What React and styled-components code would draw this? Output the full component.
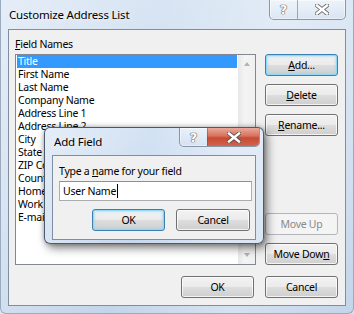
import React from 'react';
import styled, { createGlobalStyle, css } from 'styled-components';

const GlobalStyle = createGlobalStyle`
  html, body {
    margin: 0;
    padding: 0;
  }
  body {
    width: 354px;
    height: 314px;
    overflow: hidden;
    background: #dbe6f2;
    font-family: "Noto Sans", "Open Sans", sans-serif;
    font-size: 10.5px;
    letter-spacing: -0.25px;
    color: #000;
  }
`;

const Window = styled.div`
  position: relative;
  box-sizing: border-box;
  width: 354px;
  height: 314px;
  display: flex;
  flex-direction: column;
  padding: 0 7px 8px 7px;
  border-radius: 0 0 6px 6px;
  border: 1px solid #9aabbf;
  border-top: none;
  background:
    linear-gradient(100deg, rgba(255,255,255,0.35) 0%, rgba(255,255,255,0) 40%, rgba(255,255,255,0.3) 70%, rgba(255,255,255,0) 100%),
    linear-gradient(180deg, #d7e4f3 0%, #cddcee 60%, #c3d5ea 100%);
`;

const TitleBar = styled.div`
  height: ${p => p.$h}px;
  display: flex;
  align-items: center;
  flex-shrink: 0;
`;

const Title = styled.span`
  padding-left: ${p => p.$indent || 0}px;
  font-size: 11.5px;
  letter-spacing: -0.2px;
  color: #000;
  text-shadow: 0 0 6px rgba(255,255,255,0.9);
  flex: 1;
`;

const CaptionButtons = styled.div`
  align-self: flex-start;
  display: flex;
  height: ${p => p.$h}px;
  margin-right: ${p => p.$mr || 0}px;
  border: 1px solid rgba(70, 85, 105, 0.55);
  border-top: none;
  border-radius: 0 0 5px 5px;
  overflow: hidden;
  box-shadow: inset 0 0 0 1px rgba(255,255,255,0.5);
`;

const CaptionButton = styled.div`
  width: ${p => p.$w}px;
  display: flex;
  align-items: center;
  justify-content: center;
  font-family: "DejaVu Sans", sans-serif;
  font-weight: bold;
  font-size: 13px;
  letter-spacing: 0;
  color: #fff;
  text-shadow: 0 0 1px #555, 0 0 1px #555, 0 0 1px #555;
  background: linear-gradient(180deg, rgba(255,255,255,0.45) 0%, rgba(255,255,255,0.15) 50%, rgba(200,215,235,0.2) 100%);
  & + & {
    border-left: 1px solid rgba(70, 85, 105, 0.45);
  }
  ${p => p.$close && css`
    background: linear-gradient(180deg, #e9a99a 0%, #d8705c 45%, #c74a33 55%, #d0664d 100%);
  `}
`;

const CloseGlyph = ({ color }) => (
  <svg width="14" height="11" viewBox="0 0 14 11">
    <path d="M2 1.5 L12 9.5 M12 1.5 L2 9.5" stroke="#4a4a4a" strokeWidth="4.2" strokeLinecap="square" opacity="0.8" />
    <path d="M2 1.5 L12 9.5 M12 1.5 L2 9.5" stroke={color} strokeWidth="2.4" strokeLinecap="square" />
  </svg>
);

const Client = styled.div`
  flex: 1;
  box-sizing: border-box;
  display: flex;
  flex-direction: column;
  border: 1px solid #7f8fa3;
  background: #f0f0f0;
  padding: ${p => p.$pad};
`;

const Label = styled.div`
  height: 15px;
  line-height: 15px;
  white-space: nowrap;
`;

const Body = styled.div`
  display: grid;
  grid-template-columns: 1fr 73px;
  column-gap: 9px;
  margin-top: 2px;
  height: 211px;
`;

const ListBox = styled.div`
  box-sizing: border-box;
  display: grid;
  grid-template-columns: 1fr 17px;
  border: 1px solid #828790;
  background: #fff;
`;

const Items = styled.div`
  padding: 0 1px;
`;

const Item = styled.div`
  height: 13px;
  line-height: 13px;
  padding-left: 1px;
  white-space: nowrap;
  overflow: hidden;
  ${p => p.$selected && css`
    background: #3399ff;
    color: #fff;
  `}
`;

const ScrollBar = styled.div`
  display: flex;
  flex-direction: column;
  justify-content: space-between;
  align-items: center;
  padding: 7px 0;
  background: linear-gradient(90deg, #e8e8e8 0%, #f4f4f4 40%, #f0f0f0 100%);
`;

const Arrow = styled.div`
  width: 0;
  height: 0;
  border-left: 3.5px solid transparent;
  border-right: 3.5px solid transparent;
  ${p => p.$down
    ? css`border-top: 4px solid #b4b4b4;`
    : css`border-bottom: 4px solid #b4b4b4;`}
`;

const SideColumn = styled.div`
  display: flex;
  flex-direction: column;
  justify-content: space-between;
`;

const Stack = styled.div`
  display: flex;
  flex-direction: column;
  gap: 8px;
`;

const Button = styled.button`
  box-sizing: border-box;
  width: ${p => p.$w || 73}px;
  height: 22px;
  padding: 0;
  font: inherit;
  letter-spacing: inherit;
  color: #000;
  border: 1px solid #707070;
  border-radius: 3px;
  background: linear-gradient(180deg, #f2f2f2 0%, #ebebeb 48%, #dddddd 52%, #cfcfcf 100%);
  box-shadow: inset 0 0 0 1px rgba(255,255,255,0.75);
  ${p => p.$focus && css`
    border-color: #3c7fb1;
    box-shadow: inset 0 0 0 1px #8fd8f6, inset 0 0 2px 2px rgba(143,216,246,0.5);
  `}
  ${p => p.$disabled && css`
    color: #8a8a8a;
    border-color: #b3b7ba;
    background: #f4f4f4;
    box-shadow: none;
  `}
`;

const Footer = styled.div`
  display: flex;
  justify-content: flex-end;
  gap: ${p => p.$gap}px;
  margin-top: ${p => p.$mt}px;
`;

const Dialog = styled.div`
  position: absolute;
  left: 43px;
  top: 127px;
  box-sizing: border-box;
  width: 220px;
  height: 117px;
  display: flex;
  flex-direction: column;
  padding: 0 7px 5px 7px;
  border: 1px solid rgba(40, 55, 75, 0.8);
  border-radius: 6px;
  background:
    linear-gradient(100deg, rgba(255,255,255,0.4) 0%, rgba(255,255,255,0) 45%, rgba(255,255,255,0.35) 80%),
    linear-gradient(180deg, #d3e2f3 0%, #c6d8ee 100%);
  box-shadow: 3px 4px 10px rgba(0,0,0,0.5), 0 0 4px rgba(0,0,0,0.25);
`;

const TextInput = styled.div`
  box-sizing: border-box;
  height: 20px;
  width: 193px;
  margin-top: 2px;
  display: flex;
  align-items: center;
  padding-left: 3px;
  border: 1px solid #abadb3;
  border-top-color: #8e9196;
  background: #fff;
`;

const Caret = styled.span`
  display: inline-block;
  width: 1px;
  height: 14px;
  background: #000;
  margin-left: 1px;
`;

const fields = [
  'Title', 'First Name', 'Last Name', 'Company Name', 'Address Line 1',
  'Address Line 2', 'City', 'State', 'ZIP Code', 'Country',
  'Home Phone', 'Work Phone', 'E-mail Address',
];

export default function App() {
  return (
    <>
      <GlobalStyle />
      <Window>
        <TitleBar $h={29}>
          <Title $indent={1}>Customize Address List</Title>
          <CaptionButtons $h={19}>
            <CaptionButton $w={27}>?</CaptionButton>
            <CaptionButton $w={47}><CloseGlyph color="#fff" /></CaptionButton>
          </CaptionButtons>
        </TitleBar>
        <Client $pad="7px 7px 7px 6px">
          <Label><u>F</u>ield Names</Label>
          <Body>
            <ListBox>
              <Items>
                {fields.map((f, i) => (
                  <Item key={f} $selected={i === 0}>{f}</Item>
                ))}
              </Items>
              <ScrollBar>
                <Arrow />
                <Arrow $down />
              </ScrollBar>
            </ListBox>
            <SideColumn>
              <Stack>
                <Button $focus><u>A</u>dd...</Button>
                <Button><u>D</u>elete</Button>
                <Button><u>R</u>ename...</Button>
              </Stack>
              <Stack>
                <Button $disabled>Move Up</Button>
                <Button>Move Dow<u>n</u></Button>
              </Stack>
            </SideColumn>
          </Body>
          <Footer $gap={11} $mt={11}>
            <Button>OK</Button>
            <Button>Cancel</Button>
          </Footer>
        </Client>

        <Dialog>
          <TitleBar $h={27}>
            <Title $indent={2}>Add Field</Title>
            <CaptionButtons $h={18} $mr={-4}>
              <CaptionButton $w={27}>?</CaptionButton>
              <CaptionButton $w={51} $close><CloseGlyph color="#fff" /></CaptionButton>
            </CaptionButtons>
          </TitleBar>
          <Client $pad="8px 5px 8px 6px">
            <Label>Type a <u>n</u>ame for your field</Label>
            <TextInput>User Name<Caret /></TextInput>
            <Footer $gap={11} $mt={8}>
              <Button $focus>OK</Button>
              <Button $w={74}>Cancel</Button>
            </Footer>
          </Client>
        </Dialog>
      </Window>
    </>
  );
}
